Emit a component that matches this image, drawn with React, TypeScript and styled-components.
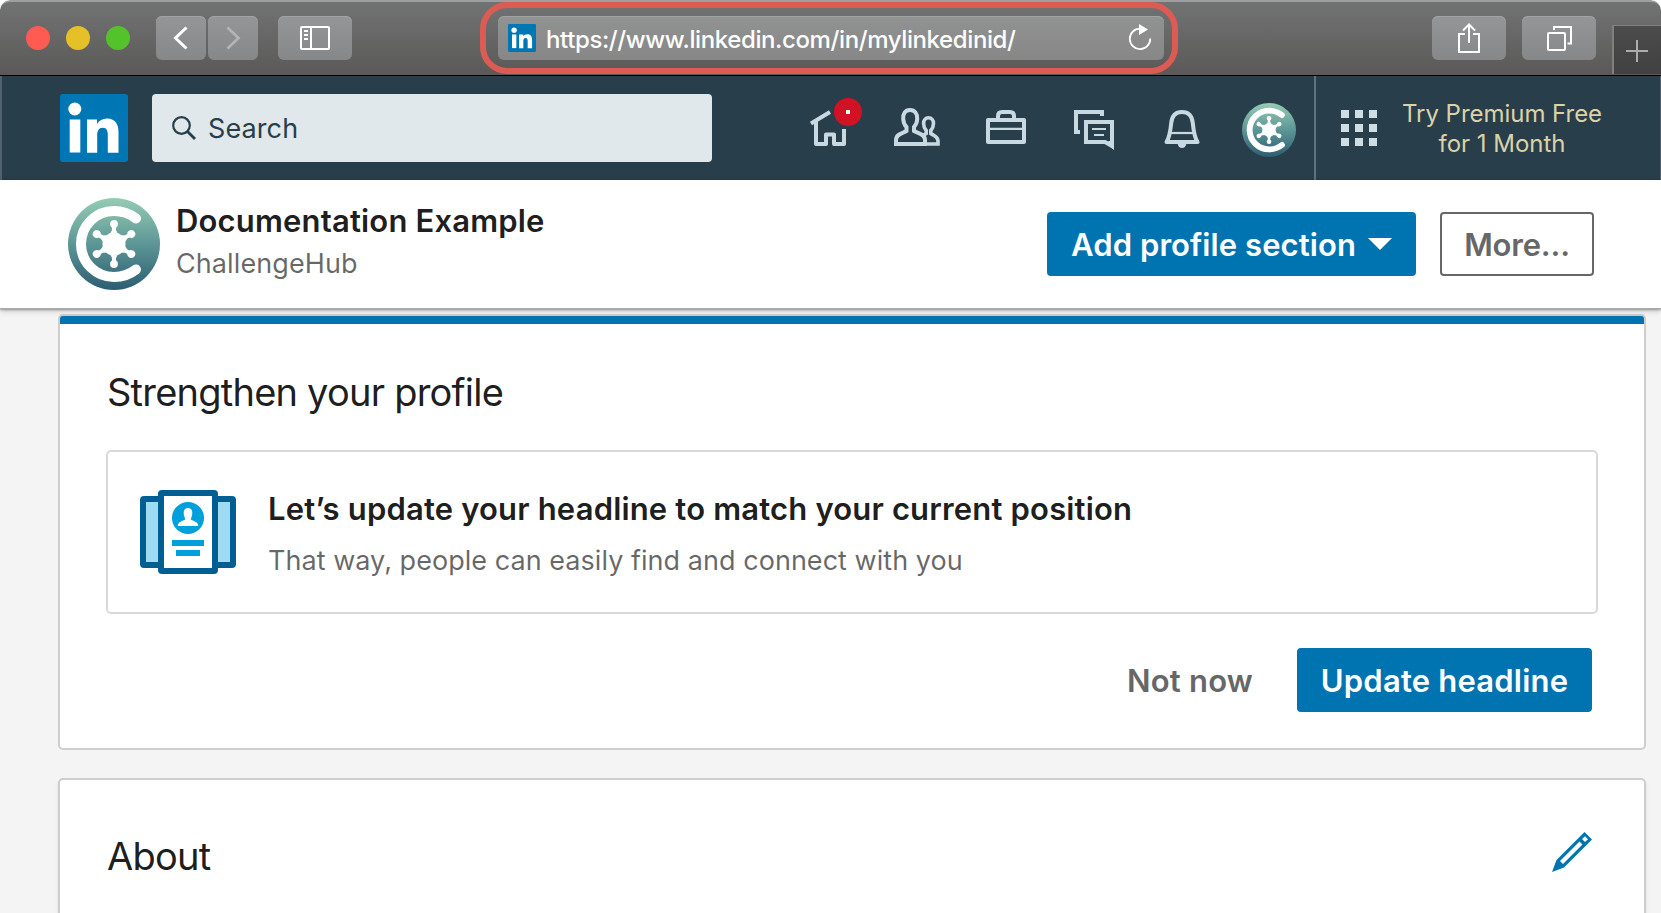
import React from 'react';
import styled, { createGlobalStyle, css } from 'styled-components';

const GlobalStyle = createGlobalStyle`
  * { box-sizing: border-box; }
  html, body { margin: 0; padding: 0; overflow: hidden; background: #fff; }
  svg { display: block; flex: none; }
  button { font: inherit; padding: 0; margin: 0; border: 0; background: none; }
  h1, h2, h3, p { margin: 0; }
`;

const Window = styled.div`
  position: relative;
  width: 1661px;
  height: 913px;
  display: flex;
  flex-direction: column;
  overflow: hidden;
  border-radius: 10px 10px 0 0;
  background: #f4f4f4;
  font-family: Inter, "Liberation Sans", sans-serif;
`;

/* Browser toolbar */

const Toolbar = styled.header`
  display: flex;
  align-items: flex-start;
  height: 76px;
  flex: none;
  padding: 14px 0 0 26px;
  border-top: 2px solid #9c9e9f;
  border-bottom: 1px solid #000;
  border-radius: 10px 10px 0 0;
  background: linear-gradient(#717372, #5a5958);
`;

const Lights = styled.div`
  display: flex;
  gap: 16px;
  margin: 10px 26px 0 0;
`;

const Light = styled.span<{ $color: string }>`
  width: 24px;
  height: 24px;
  border-radius: 50%;
  background: ${(p) => p.$color};
`;

const ToolButton = styled.button<{ $width: number; $gap?: number }>`
  display: flex;
  align-items: center;
  justify-content: center;
  width: ${(p) => p.$width}px;
  height: 44px;
  margin-right: ${(p) => p.$gap ?? 0}px;
  border-radius: 6px;
  background: linear-gradient(#959697, #868788);
  box-shadow: inset 0 1px 0 #a2a3a4;
`;

const AddressHighlight = styled.div`
  width: 698px;
  height: 72px;
  margin: -14px 254px 0 0;
  padding: 8px 8px 8px 12px;
  border: 6px solid #dc5c54;
  border-radius: 27px;
`;

const AddressBar = styled.div`
  display: flex;
  align-items: center;
  height: 44px;
  width: 666px;
  padding: 0 12px 0 10px;
  border-radius: 6px;
  background: linear-gradient(#919292, #868786);
  box-shadow: inset 0 1px 0 #a2a2a2;
`;

const Url = styled.span`
  flex: 1;
  margin-left: 10px;
  padding-top: 3px;
  font-size: 24px;
  font-weight: 500;
  line-height: 40px;
  letter-spacing: -0.39px;
  color: #fff;
`;

const NewTab = styled.button`
  display: flex;
  width: 49px;
  height: 49px;
  margin: 9px 0 0 16px;
  padding: 14px 0 0 12px;
  border-left: 2px solid #80807f;
  border-top: 1px solid #80807f;
  background: linear-gradient(#4a4b4a, #404140);
`;

/* Site navigation */

const Nav = styled.nav`
  display: flex;
  height: 104px;
  flex: none;
  padding-left: 58px;
  border-left: 2px solid #4f626e;
  border-right: 1px solid #4f626e;
  background: #283e4a;
`;

const SearchBox = styled.div`
  display: flex;
  align-items: center;
  width: 560px;
  height: 68px;
  margin: 18px 98px 0 24px;
  padding-left: 20px;
  border-radius: 4px;
  background: #e1e8eb;
`;

const SearchText = styled.span`
  margin-left: 12px;
  padding-top: 2px;
  font-size: 27px;
  line-height: 40px;
  letter-spacing: 0.1px;
  color: #283e4a;
`;

const Logo = styled.div`
  margin-top: 18px;
`;

const NavItems = styled.div`
  display: flex;
  align-items: flex-start;
  padding-top: 32px;
`;

const NavItem = styled.a<{ $gap: number }>`
  position: relative;
  margin-right: ${(p) => p.$gap}px;
`;

const Badge = styled.span`
  position: absolute;
  top: -10px;
  left: 24px;
  display: flex;
  align-items: center;
  justify-content: center;
  width: 28px;
  height: 28px;
  border-radius: 50%;
  background: #d11124;
  &::after {
    content: '';
    width: 4px;
    height: 4px;
    background: #fff;
  }
`;

const NavAvatar = styled.div`
  margin: 27px 18px 0 0;
`;

const NavEnd = styled.div`
  display: flex;
  border-left: 2px solid #5f727e;
  padding-left: 25px;
`;

const AppGrid = styled.div`
  display: grid;
  grid-template-columns: repeat(3, 8px);
  grid-auto-rows: 8px;
  gap: 6px;
  align-content: start;
  margin-top: 34px;
  span { background: #cfdde5; }
`;

const Premium = styled.p`
  width: 220px;
  margin-left: 15px;
  padding-top: 23px;
  font-size: 24px;
  line-height: 30px;
  letter-spacing: -0.03px;
  text-align: center;
  color: #dbd3a8;
`;

/* Profile header */

const ProfileBar = styled.section`
  position: relative;
  z-index: 1;
  display: flex;
  height: 129px;
  flex: none;
  padding: 18px 67px 0 68px;
  background: #fff;
  border-bottom: 1px solid #a9a9a9;
  box-shadow: 0 1px 2px rgba(0, 0, 0, 0.3), 0 2px 6px rgba(0, 0, 0, 0.18);
`;

const ProfileText = styled.div`
  flex: 1;
  margin-left: 16px;
  padding-top: 3px;
`;

const Name = styled.h1`
  font-size: 31px;
  font-weight: 600;
  line-height: 40px;
  letter-spacing: 0.17px;
  color: rgba(0, 0, 0, 0.9);
`;

const Company = styled.p`
  padding-top: 3px;
  font-size: 27px;
  line-height: 40px;
  letter-spacing: 0.09px;
  color: rgba(0, 0, 0, 0.6);
`;

const ActionButton = styled.button<{ $width: number; $kind?: 'solid' | 'outline' | 'text'; $ls?: number }>`
  display: flex;
  align-items: center;
  justify-content: center;
  width: ${(p) => p.$width}px;
  height: 64px;
  border-radius: 4px;
  font-size: 31px;
  font-weight: 600;
  letter-spacing: ${(p) => p.$ls ?? 0.2}px;
  white-space: nowrap;
  ${(p) =>
    p.$kind === 'outline'
      ? css`color: #676767; background: #fff; border: 2px solid #676767;`
      : p.$kind === 'text'
      ? css`color: #676767;`
      : css`color: #fff; background: #0073b1;`}
`;

const Caret = styled.svg`
  margin-left: 12px;
`;

const ProfileActions = styled.div`
  display: flex;
  gap: 24px;
  margin-top: 14px;
`;

/* Cards */

const Cards = styled.main`
  display: flex;
  flex-direction: column;
  gap: 28px;
  padding: 5px 15px 0 58px;
`;

const Card = styled.section<{ $height: number; $accent?: boolean }>`
  height: ${(p) => p.$height}px;
  flex: none;
  padding: 0 46px;
  border: 2px solid #cdcdcd;
  border-radius: 5px;
  background: #fff;
  box-shadow: 0 3px 4px rgba(0, 0, 0, 0.08);
  ${(p) =>
    p.$accent &&
    css`
      background: linear-gradient(#0073b1 8px, #fff 8px);
      box-shadow: none;
    `}
`;

const Heading = styled.h2`
  padding-left: 1px;
  font-size: 38px;
  font-weight: 400;
  line-height: 48px;
  letter-spacing: -0.77px;
  color: rgba(0, 0, 0, 0.9);
`;

const StrengthenHeading = styled(Heading)`
  padding-top: 52px;
`;

const Suggestion = styled.div`
  display: flex;
  width: 1492px;
  height: 164px;
  margin-top: 34px;
  padding: 38px 0 0 32px;
  border: 2px solid #d9d9d9;
  border-radius: 5px;
`;

const SuggestionText = styled.div`
  margin: -1px 0 0 32px;
`;

const SuggestionTitle = styled.h3`
  font-size: 31px;
  font-weight: 600;
  line-height: 40px;
  letter-spacing: 0.17px;
  color: rgba(0, 0, 0, 0.9);
`;

const SuggestionNote = styled.p`
  padding-top: 12px;
  font-size: 27px;
  line-height: 40px;
  letter-spacing: 0.04px;
  color: rgba(0, 0, 0, 0.6);
`;

const CardActions = styled.div`
  display: flex;
  justify-content: flex-end;
  gap: 44px;
  margin: 34px 6px 0 0;
`;

const AboutRow = styled.div`
  display: flex;
  justify-content: space-between;
  padding: 52px 6px 0 0;
`;

/* Drawings */

const LinkedInMark = ({ size }: { size: number }) => (
  <svg width={size} height={size} viewBox="0 0 68 68">
    <rect width="68" height="68" rx="3" fill="#0077b5" />
    <g fill="#fff">
      <circle cx="14.8" cy="15" r="6.5" />
      <rect x="9.7" y="25.5" width="10.6" height="33" />
      <path d="M27 25.5H37V30C39 26.700 42.500 24.600 47 24.600C56 24.600 58.500 31 58.500 39V58.800H47.800V41.500C47.800 37 47 33.800 42.800 33.800C38.500 33.800 37.200 37.300 37.200 41.500V58.800H27Z" />
    </g>
  </svg>
);

const Avatar = ({ size, id }: { size: number; id: string }) => (
  <svg width={size} height={size} viewBox="0 0 92 92">
    <defs>
      <linearGradient id={id} x1="0" y1="0" x2="0" y2="1">
        <stop offset="0" stopColor="#95ccb3" />
        <stop offset="0.5" stopColor="#5d9696" />
        <stop offset="1" stopColor="#2c5d72" />
      </linearGradient>
    </defs>
    <circle cx="46" cy="46" r="46" fill={`url(#${id})`} />
    <path d="M68 20.500C62 15.800 54 13 46 13C27.500 13 13 27.800 13 46S27.500 79 46 79C54 79 62 76.200 68 71.500" fill="none" stroke="#fff" strokeWidth="10" strokeLinecap="round" />
    <circle cx="46" cy="46" r="11.500" fill="#fff" />
    {[0, 60, 120, 180, 240, 300].map((a) => (
      <g key={a} transform={`rotate(${a} 46 46)`} fill="#fff">
        <path d="M41.500 37L44 32V27H48V32L50.500 37Z" />
        <circle cx="46" cy="26" r="3.900" />
      </g>
    ))}
  </svg>
);

const ProfileCardsIcon = () => (
  <svg width="96" height="84" viewBox="0 0 96 84">
    <rect x="3" y="9" width="90" height="66" rx="1" fill="#9fdcf4" stroke="#005e93" strokeWidth="6" />
    <rect x="21" y="3" width="54" height="78" rx="1" fill="#fff" stroke="#005e93" strokeWidth="6" />
    <circle cx="48" cy="28" r="16" fill="#00a0dc" />
    <path d="M48 18C51 18 52.500 20 52.300 23C52.200 26 51 27.500 50.800 29.500C53 31 58 31.500 58.300 36H37.700C38 31.500 43 31 45.200 29.500C45 27.500 43.800 26 43.700 23C43.500 20 45 18 48 18Z" fill="#fff" />
    <path d="M32 50H64V56H32ZM36 60H60V66H36Z" fill="#00a0dc" />
  </svg>
);

const stroke = { fill: 'none', stroke: '#c9d9e2', strokeWidth: 4 } as const;
const white = { fill: 'none', stroke: '#fff', strokeWidth: 2 } as const;

export default function App() {
  return (
    <>
      <GlobalStyle />
      <Window>
        <Toolbar>
          <Lights>
            <Light $color="#ff5b52" />
            <Light $color="#e6c029" />
            <Light $color="#53c22b" />
          </Lights>
          <ToolButton $width={50} $gap={2} aria-label="Back">
            <svg width="16" height="26" viewBox="0 0 16 26"><path d="M13.500 2.500L2.500 13L13.500 23.500" {...white} strokeWidth="3" /></svg>
          </ToolButton>
          <ToolButton $width={50} $gap={20} aria-label="Forward">
            <svg width="16" height="26" viewBox="0 0 16 26"><path d="M2.500 2.500L13.500 13L2.500 23.500" {...white} stroke="#b5b5b5" strokeWidth="2.600" /></svg>
          </ToolButton>
          <ToolButton $width={74} $gap={128} aria-label="Sidebar">
            <svg width="30" height="24" viewBox="0 0 30 24">
              <rect x="1" y="1" width="28" height="22" rx="1" {...white} />
              <path d="M11 1V23M4 5H8M4 9H8M4 13H8" {...white} />
            </svg>
          </ToolButton>
          <AddressHighlight>
            <AddressBar>
              <LinkedInMark size={28} />
              <Url>https://www.linkedin.com/in/mylinkedinid/</Url>
              <svg width="24" height="28" viewBox="0 0 24 28">
                <path d="M12 4.700A10.200 10.200 0 1 0 22.200 14.500" fill="none" stroke="#fff" strokeWidth="1.800" />
                <path d="M11 0V11L20 5.500Z" fill="#fff" />
              </svg>
            </AddressBar>
          </AddressHighlight>
          <ToolButton $width={74} $gap={16} aria-label="Share">
            <svg width="24" height="32" viewBox="0 0 24 32">
              <path d="M8 12H2V30H22V12H16M12 21V2M6 8.500L12 2.500L18 8.500" {...white} />
            </svg>
          </ToolButton>
          <ToolButton $width={74} aria-label="Tabs">
            <svg width="26" height="26" viewBox="0 0 26 26">
              <rect x="2" y="8" width="17" height="17" rx="1" {...white} />
              <path d="M8 5V2H25V18.500H21.500" {...white} />
            </svg>
          </ToolButton>
          <NewTab aria-label="New tab">
            <svg width="22" height="22" viewBox="0 0 22 22"><path d="M11 0V22M0 11H22" stroke="#abacab" strokeWidth="2" /></svg>
          </NewTab>
        </Toolbar>

        <Nav>
          <Logo><LinkedInMark size={68} /></Logo>
          <SearchBox>
            <svg width="24" height="24" viewBox="0 0 24 24">
              <circle cx="9.500" cy="9.500" r="8.300" fill="none" stroke="#283e4a" strokeWidth="2.200" />
              <path d="M15.500 15.500L23 23" stroke="#283e4a" strokeWidth="2.800" />
            </svg>
            <SearchText>Search</SearchText>
          </SearchBox>
          <NavItems>
            <NavItem $gap={44}>
              <svg width="40" height="40" viewBox="0 0 40 40">
                <path d="M1 15.600L20 4" {...stroke} />
                <path d="M6 13V36H16V26.500H24V36H34V21" {...stroke} strokeLinejoin="round" />
              </svg>
              <Badge />
            </NavItem>
            <NavItem $gap={46}>
              <svg width="46" height="40" viewBox="0 0 46 40">
                <path d="M16 2C11 2 8.800 6 9.200 11C9.500 15 11 17.500 12.500 19V23C9 25.200 2 25.500 2 32V36H31V32C31 25.500 23.500 25.200 20 23V19C21.500 17.500 23 15 23.200 11C23.500 6 21 2 16 2Z" {...stroke} />
                <path d="M31 36H44V33C44 28.500 39.500 27.500 36.800 25.500V22.500C38.500 20.500 39.500 18 39.500 15.500C39.500 12 37.500 9.800 34.500 9.800S29.600 12 29.600 15.500C29.600 18 30.500 20.500 32.200 22.500V25.500L29 27.500" {...stroke} strokeWidth="3.600" />
              </svg>
            </NavItem>
            <NavItem $gap={48}>
              <svg width="40" height="40" viewBox="0 0 40 40">
                <rect x="2" y="12" width="36" height="22" {...stroke} strokeLinejoin="round" />
                <path d="M12 11V8Q12 4 16 4H24Q28 4 28 8V11" {...stroke} />
                <path d="M2 20.800H38" {...stroke} strokeWidth="2.200" />
              </svg>
            </NavItem>
            <NavItem $gap={50}>
              <svg width="40" height="44" viewBox="0 0 40 44">
                <path d="M6 24H2V4H28V8" {...stroke} />
                <path d="M12 14H38V38L31 34H12Z" {...stroke} />
                <path d="M31 34L40 42V32Z" fill="#c9d9e2" />
                <path d="M18 21H32M20 27H30" {...stroke} strokeWidth="2.200" />
              </svg>
            </NavItem>
            <NavItem $gap={42}>
              <svg width="36" height="40" viewBox="0 0 36 40">
                <path d="M2.500 34C6 28.500 6.500 22 7.200 15C8 7.500 12 4 18 4S28 7.500 28.800 15C29.500 22 30 28.500 33.500 34Z" {...stroke} strokeLinejoin="round" />
                <path d="M5 25H31" {...stroke} strokeWidth="2.200" />
                <path d="M13.500 35.500H22.500Q21.500 40 18 40T13.500 35.500Z" fill="#c9d9e2" />
              </svg>
            </NavItem>
          </NavItems>
          <NavAvatar><Avatar size={54} id="navAvatar" /></NavAvatar>
          <NavEnd>
            <AppGrid>{Array.from({ length: 9 }, (_, i) => <span key={i} />)}</AppGrid>
            <Premium>Try Premium Free<br />for 1 Month</Premium>
          </NavEnd>
        </Nav>

        <ProfileBar>
          <Avatar size={92} id="profileAvatar" />
          <ProfileText>
            <Name>Documentation Example</Name>
            <Company>ChallengeHub</Company>
          </ProfileText>
          <ProfileActions>
            <ActionButton $width={369} $ls={0.08}>
              Add profile section
              <Caret width="24" height="12" viewBox="0 0 24 12"><path d="M0 0H24L12 12Z" fill="#fff" /></Caret>
            </ActionButton>
            <ActionButton $width={154} $kind="outline" $ls={-0.2}>More...</ActionButton>
          </ProfileActions>
        </ProfileBar>

        <Cards>
          <Card $height={436} $accent>
            <StrengthenHeading>Strengthen your profile</StrengthenHeading>
            <Suggestion>
              <ProfileCardsIcon />
              <SuggestionText>
                <SuggestionTitle>Let’s update your headline to match your current position</SuggestionTitle>
                <SuggestionNote>That way, people can easily find and connect with you</SuggestionNote>
              </SuggestionText>
            </Suggestion>
            <CardActions>
              <ActionButton $width={126} $kind="text">Not now</ActionButton>
              <ActionButton $width={295}>Update headline</ActionButton>
            </CardActions>
          </Card>
          <Card $height={220}>
            <AboutRow>
              <Heading>About</Heading>
              <svg width="40" height="40" viewBox="0 0 40 40">
                <path d="M32.500 0L40 7.500L12 35.500L0 40L4.500 28ZM8 29L11 32L30.500 12.500L27.500 9.500ZM30 7L33 10L36 7.200L33 4.200Z" fill="#0073b1" fillRule="evenodd" />
              </svg>
            </AboutRow>
          </Card>
        </Cards>
      </Window>
    </>
  );
}
